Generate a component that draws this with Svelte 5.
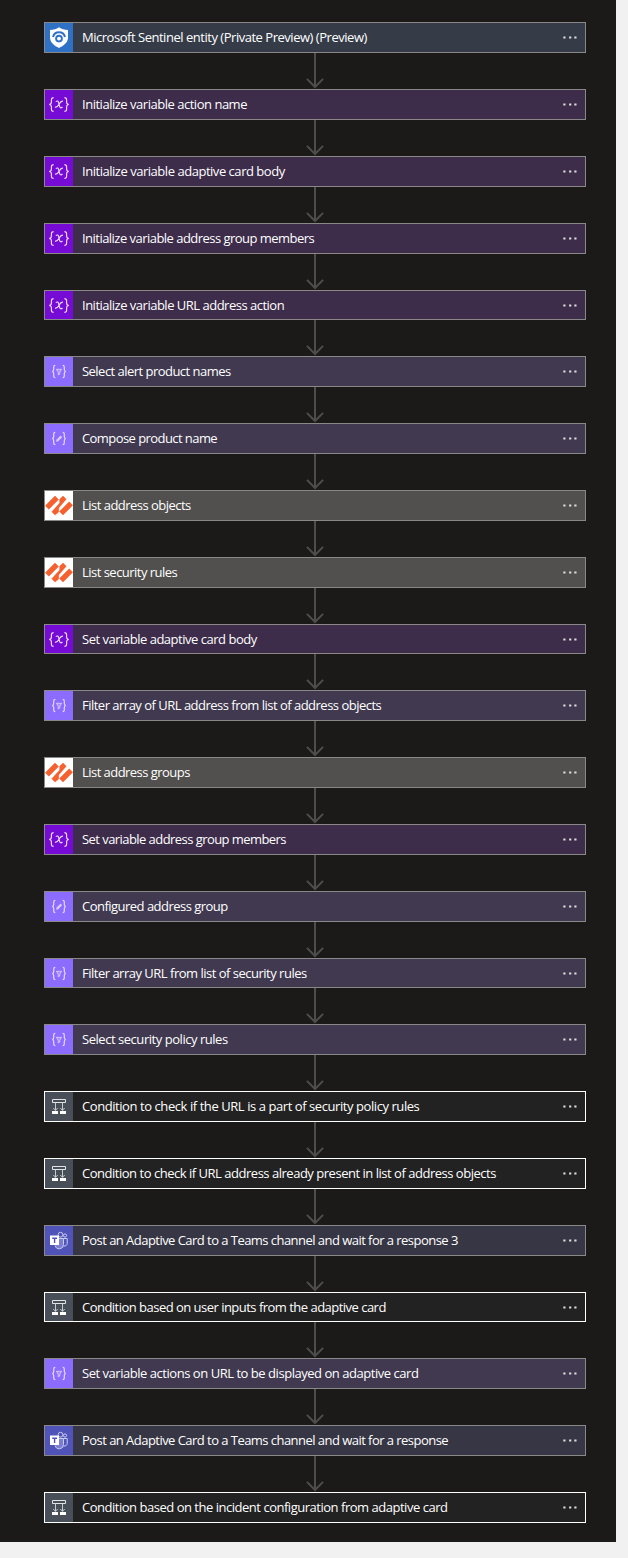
<script>
  // kind, label, letter spacing in px
  const steps = [
    ['sentinel', 'Microsoft Sentinel entity (Private Preview) (Preview)', -0.475],
    ['variable', 'Initialize variable action name', -0.48],
    ['variable', 'Initialize variable adaptive card body', -0.47],
    ['variable', 'Initialize variable address group members', -0.53],
    ['variable', 'Initialize variable URL address action', -0.5],
    ['filter', 'Select alert product names', -0.53],
    ['compose', 'Compose product name', -0.57],
    ['palo', 'List address objects', -0.52],
    ['palo', 'List security rules', -0.52],
    ['variable', 'Set variable adaptive card body', -0.48],
    ['filter', 'Filter array of URL address from list of address objects', -0.51],
    ['palo', 'List address groups', -0.54],
    ['variable', 'Set variable address group members', -0.56],
    ['compose', 'Configured address group', -0.52],
    ['filter', 'Filter array URL from list of security rules', -0.5],
    ['filter', 'Select security policy rules', -0.46],
    ['condition', 'Condition to check if the URL is a part of security policy rules', -0.43],
    ['condition', 'Condition to check if URL address already present in list of address objects', -0.48],
    ['teams', 'Post an Adaptive Card to a Teams channel and wait for a response 3', -0.54],
    ['condition', 'Condition based on user inputs from the adaptive card', -0.52],
    ['filter', 'Set variable actions on URL to be displayed on adaptive card', -0.465],
    ['teams', 'Post an Adaptive Card to a Teams channel and wait for a response', -0.54],
    ['condition', 'Condition based on the incident configuration from adaptive card', -0.48]
  ];
</script>

<main>
  {#each steps as [kind, label, tracking], i}
    {#if i > 0}
      <svg class="arrow" viewBox="0 0 18 36" preserveAspectRatio="none" aria-hidden="true">
        <path d="M9 0V34M.9 25.900 9 34l8.100-8.100" />
      </svg>
    {/if}
    <div class="card {kind}">
      <span class="icon">
        <svg viewBox="0 0 28 29" aria-hidden="true">
          {#if kind === 'sentinel'}
            <path fill="#fff" d="M14 4.300c2.600 1.900 5.400 2.600 9 2.700v7.500c0 5-4.500 8.300-9 10.500-4.500-2.200-9-5.500-9-10.500V7c3.600-.1 6.400-.8 9-2.700Z" />
            <path fill="none" stroke="#2f72c5" stroke-width="2" d="M8 14a6.200 6.200 0 0 1 12 0" />
            <circle cx="14" cy="15.600" r="2.900" fill="none" stroke="#2f72c5" stroke-width="1.900" />
          {:else if kind === 'variable'}
            <g fill="none" stroke="#eadcf8" stroke-width="1.150">
              <path d="M8.600 7.600c-1.700 0-2.200.7-2.200 2.200v2.300c0 1.500-.6 2.300-2.200 2.400 1.600.1 2.200.9 2.200 2.400v2.300c0 1.500.5 2.200 2.200 2.200M19.400 7.600c1.700 0 2.200.7 2.200 2.200v2.300c0 1.500.6 2.300 2.200 2.400-1.600.1-2.200.9-2.200 2.400v2.300c0 1.500-.5 2.200-2.200 2.200" />
              <path d="M10.800 11.600c1.700-1.200 2.500-.5 2.900 1.200l.9 3.500c.4 1.700 1.400 2 2.900.7M18 11.200c-1.700-.4-2.700.8-3.800 2.800s-2.200 3.700-4.200 3.100" />
            </g>
          {:else if kind === 'filter' || kind === 'compose'}
            <path fill="none" stroke="#e4d9ff" stroke-width="1.200" d="M10.300 8.400c-1.300 0-1.600.6-1.600 1.700v2.400c0 1.200-.4 1.900-1.500 2 1.100.1 1.500.8 1.500 2v2.400c0 1.100.3 1.700 1.600 1.700M17.700 8.400c1.300 0 1.600.6 1.600 1.700v2.400c0 1.200.4 1.900 1.500 2-1.100.1-1.500.8-1.500 2v2.400c0 1.100-.3 1.700-1.600 1.700" />
            {#if kind === 'filter'}
              <path fill="#a68bff" stroke="#d8c9ff" stroke-width=".95" d="M11.400 12.300h5.200l-1.800 2.900v1.800l-1.600.9v-2.700Z" />
            {:else}
              <path fill="#d8c9ff" d="m11 17.800.6-2.300 3.900-3.900 1.700 1.700-3.900 3.900Z" />
            {/if}
          {:else if kind === 'palo'}
            <g fill="#f6602f" stroke="#f6602f" stroke-width=".5" stroke-linejoin="round">
              <path d="M.3 14.700 10 5l3.500 3.500-9.700 9.700Z" />
              <path d="M14.700 8.200 18 5l3.200 3.200-7.500 8.700v4.100L10 24l-3.200-3.200 7.900-8.700Z" />
              <path d="M27.700 14.300 18 24l-3.500-3.500 9.700-9.700Z" />
            </g>
          {:else if kind === 'condition'}
            <path fill="none" stroke="#e3e5e7" d="M7.500 7.500h13v3h-13Z" />
            <path fill="none" stroke="#c8cbce" d="M10.500 10.500v8M17.500 10.500v8M8.300 16l2.200 2.300 2.200-2.300M15.300 16l2.200 2.300 2.200-2.300" />
            <path fill="#fff" d="M7 19h6v3H7ZM15 19h6v3h-6Z" />
          {:else}
            <g fill="none" stroke="#c9cbf3" stroke-width="1">
              <circle cx="15.500" cy="8.700" r="2.400" />
              <circle cx="20" cy="9.500" r="1.600" />
              <path fill="#7b7ed0" d="M13 12.500h5.500v6a4.200 4.200 0 0 1-8.300 1" />
              <path d="M18.500 12.500h3.700v4.700c0 2-1.500 3.200-3.500 2.800" />
            </g>
            <path fill="#fff" d="M5 9.500h9v9.500H5Z" />
            <path fill="none" stroke="#5054b8" stroke-width="1.400" d="M7.200 12.200h4.800M9.600 12v5" />
          {/if}
        </svg>
      </span>
      <span class="label" style:letter-spacing="{tracking}px">{label}</span>
      <svg class="more" viewBox="0 0 14 29" aria-hidden="true">
        <path d="M.3 13.500h2.200v2H.3ZM6.100 13.500h2.200v2H6.100ZM11.300 13.500h2.200v2h-2.200Z" />
      </svg>
    </div>
  {/each}
</main>

<style>
  :global(body) { background: #f1f1f1; }
  main {
    display: flex;
    flex-direction: column;
    align-items: center;
    box-sizing: border-box;
    width: 616px;
    height: 1542px;
    padding: 22.480px 30px 0 44px;
    background: #1b1a19;
  }
  .card {
    display: flex;
    align-items: stretch;
    flex: none;
    box-sizing: border-box;
    width: 542px;
    height: 30.800px;
    border: 1px solid #8a8886;
    color: #fff;
  }
  .icon { width: 28px; flex: none; overflow: hidden; }
  .icon svg { display: block; width: 28px; height: 29px; }
  .label {
    flex: 1;
    padding-left: 9px;
    font: 13px/28.800px "Open Sans", "Noto Sans", sans-serif;
    white-space: nowrap;
  }
  .more { display: block; flex: none; width: 14px; height: 29px; margin-right: 8px; fill: #dedede; }
  .arrow { display: block; flex: none; width: 18px; height: 36px; }
  .arrow path { fill: none; stroke: #4d4d4d; stroke-width: 2; }
  .sentinel { background: #353c48; }
  .sentinel .icon { background: #2f72c5; }
  .variable { background: #3d2c4a; }
  .variable .icon { background: #770bd6; }
  .filter, .compose { background: #40394f; }
  .filter .icon, .compose .icon { background: #8c6cff; }
  .palo { background: #51504e; }
  .palo .icon { background: #fff; }
  .condition { background: #222; border-color: #fff; }
  .condition .icon { background: #484f58; }
  .teams { background: #373644; }
  .teams .icon { background: #5054b8; }
</style>
